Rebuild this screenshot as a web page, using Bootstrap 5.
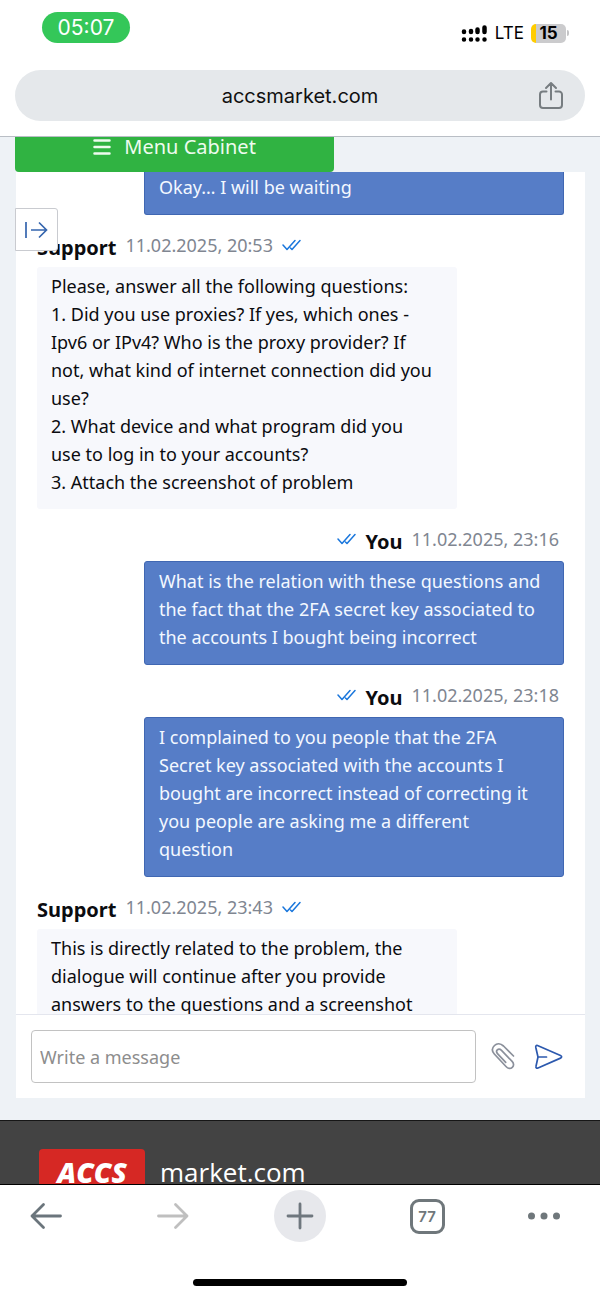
<!DOCTYPE html>
<html lang="en">
<head>
<meta charset="utf-8">
<meta name="viewport" content="width=device-width, initial-scale=1">
<title>accsmarket.com</title>
<link href="https://cdn.jsdelivr.net/npm/bootstrap@5.3.0/dist/css/bootstrap.min.css" rel="stylesheet">
<style>
body { font-family: "Noto Sans", "Open Sans", sans-serif; font-size: 18px; line-height: 28px; color: #0b0c10; background: #eef2f6; height: 100vh; overflow: hidden; }
button { background: none; border: 0; padding: 0; }
svg { display: block; }
.sys { font-family: Inter, sans-serif; }
.browser-top { background: #fff; border-bottom: 1px solid #b9bec5; }
.status-row { height: 70px; padding: 12px 31px 0 42px; }
.clock { width: 88px; height: 31px; background: #34c759; color: #fff; font-size: 21px; line-height: 31px; }
.signal-set { margin-top: 11px; font-size: 17px; line-height: 20px; color: #000; gap: 7px; }
.battery { width: 35px; height: 19px; border-radius: 5px; background: linear-gradient(90deg, #fc0 5px, #cbcbcd 5px); font-size: 17px; line-height: 19px; }
.battery-tip { width: 2px; height: 6px; background: #c4c4c6; border-radius: 0 2px 2px 0; margin-left: 1px; }
.address { height: 51px; margin: 0 15px 15px; background: #e5e8eb; color: #111; font-size: 20px; }
.address svg { right: 20px; top: 10px; }
.page-gutter { padding: 0 15px; min-height: 0; }
.menu-btn { width: 56%; height: 35px; background: #30b342; color: #eefbef; border-radius: 0 0 4px 4px; font-size: 20px; line-height: 20px; gap: 13px; padding-bottom: 16px; }
.chat { min-height: 0; margin-left: 1px; }
.feed { min-height: 0; padding: 0 21px; overflow: hidden; }
.bubble { width: 420px; max-width: 80%; padding: 5px 14px 13px; border-radius: 3px; flex-shrink: 0; }
.bubble.theirs { background: #f7f8fc; }
.bubble.mine { background: #567dc7; border: 1px solid #4067b2; color: #f3f8ff; align-self: flex-end; }
.bubble.mine:not(.tail) { padding-bottom: 13px; }
.bubble.tail { border-top: 0; border-radius: 0 0 3px 3px; padding-top: 1px; }
.meta-line { height: 52px; padding-top: 16px; gap: 9px; flex-shrink: 0; color: #808691; }
.meta-line.mine-meta { padding-right: 5px; }
.meta-line strong { color: #0b0c10; font-size: 20px; padding-top: 3px; }
.meta-line .ticks { color: #1976dc; }
.expand { left: 15px; top: 71px; width: 43px; height: 43px; background: #fff; border: 1px solid #c9cbd0; border-radius: 0 3px 3px 0; }
.composer { border-top: 1px solid #e4e6ee; padding: 15px 22px 15px 15px; gap: 15px; }
.composer input { height: 53px; border: 1px solid #c2c2c2; border-radius: 4px; padding: 0 8px; font-size: 18px; min-width: 0; }
.composer input::placeholder { color: #8d8d8d; }
.site-foot { height: 65px; margin-top: 22px; background: #434343; border-top: 1px solid #161616; border-bottom: 1px solid #000; padding: 28px 39px 0; gap: 15px; color: #fff; flex-shrink: 0; }
.logo-tag { width: 106px; height: 35px; padding-top: 11px; background: #d62824; border-radius: 4px 4px 0 0; font: italic 800 28px/24px "Open Sans", sans-serif; }
.logo-rest { padding-top: 11px; font: 26px/24px "Open Sans", sans-serif; }
.browser-nav { background: #fff; padding: 5px 20px 0; height: 113px; }
.browser-nav button { width: 52px; height: 52px; }
.browser-nav .new-tab { background: #e7e8ec; }
.tab-count { width: 35px; height: 35px; border: 3px solid #6f777b; border-radius: 9px; color: #6f777b; font-size: 15px; line-height: 29px; font-weight: 600; }
.home-bar { width: 214px; height: 7px; border-radius: 4px; background: #000; margin: 37px auto 0; }
</style>
</head>
<body class="d-flex flex-column">
<svg width="0" height="0" class="position-absolute">
  <symbol id="ticks" viewBox="0 0 19 12"><path d="M1 6l4 4.500L13 1.500M8.500 9l1.500 1.500L18 1.500" fill="none" stroke="currentColor" stroke-width="1.500" stroke-linecap="round" stroke-linejoin="round"/></symbol>
</svg>

<header class="browser-top sys flex-shrink-0">
  <div class="status-row d-flex justify-content-between align-items-start">
    <div class="clock rounded-pill text-center">05:07</div>
    <div class="signal-set d-flex align-items-center">
      <svg width="27" height="20" viewBox="0 0 27 20"><g stroke="#000" stroke-width="4.500" stroke-linecap="round"><path d="M3 8.500v.5M10 8v1M16.500 6.500v2.500M23.500 4.500v4.500M3 16.500v.1M10 16.500v.1M16.500 16.500v.1M23.500 16.500v.1"/></g></svg>
      <span>LTE</span>
      <div class="d-flex align-items-center"><div class="battery text-center fw-bold">15</div><div class="battery-tip"></div></div>
    </div>
  </div>
  <div class="address rounded-pill d-flex align-items-center justify-content-center position-relative">
    <span>accsmarket.com</span>
    <button aria-label="Share"><svg class="position-absolute" width="28" height="32" viewBox="0 0 28 32" fill="none" stroke="#777d81" stroke-width="2" stroke-linecap="round" stroke-linejoin="round"><path d="M9.500 11.500H6a3 3 0 0 0-3 3V25a3 3 0 0 0 3 3h16a3 3 0 0 0 3-3V14.500a3 3 0 0 0-3-3h-3.500M14 19.500V3.500M9 8l5-5 5 5"/></svg></button>
  </div>
</header>

<main class="page-gutter d-flex flex-column flex-grow-1 position-relative">
  <button class="menu-btn d-flex align-items-center justify-content-center flex-shrink-0">
    <svg width="18" height="18" viewBox="0 0 18 18" stroke="currentColor" stroke-width="2.500" stroke-linecap="round"><path d="M1.500 2.500h15M1.500 9h15M1.500 15.500h15"/></svg>
    <span>Menu Cabinet</span>
  </button>
  <section class="chat bg-white d-flex flex-column flex-grow-1">
    <div class="feed d-flex flex-column flex-grow-1">
      <div class="bubble mine tail">Okay… I will be waiting</div>

      <div class="meta-line d-flex"><strong>Support</strong><span>11.02.2025, 20:53</span><svg class="ticks mt-2" width="19" height="12"><use href="#ticks"/></svg></div>
      <div class="bubble theirs">Please, answer all the following questions:<br>1. Did you use proxies? If yes, which ones -<br>Ipv6 or IPv4? Who is the proxy provider? If<br>not, what kind of internet connection did you use?<br>2. What device and what program did you<br>use to log in to your accounts?<br>3. Attach the screenshot of problem</div>

      <div class="meta-line mine-meta d-flex justify-content-end"><svg class="ticks mt-2" width="19" height="12"><use href="#ticks"/></svg><strong>You</strong><span>11.02.2025, 23:16</span></div>
      <div class="bubble mine">What is the relation with these questions and the fact that the 2FA secret key associated to the accounts I bought being incorrect</div>

      <div class="meta-line mine-meta d-flex justify-content-end"><svg class="ticks mt-2" width="19" height="12"><use href="#ticks"/></svg><strong>You</strong><span>11.02.2025, 23:18</span></div>
      <div class="bubble mine">I complained to you people that the 2FA<br>Secret key associated with the accounts I<br>bought are incorrect instead of correcting it<br>you people are asking me a different<br>question</div>

      <div class="meta-line d-flex"><strong>Support</strong><span>11.02.2025, 23:43</span><svg class="ticks mt-2" width="19" height="12"><use href="#ticks"/></svg></div>
      <div class="bubble theirs">This is directly related to the problem, the dialogue will continue after you provide answers to the questions and a screenshot</div>
    </div>
    <form class="composer d-flex align-items-center">
      <input type="text" class="flex-grow-1" placeholder="Write a message" aria-label="Write a message">
      <button type="button" aria-label="Attach file"><svg width="24" height="28" viewBox="0 0 24 28" fill="none" stroke="#8b909b" stroke-width="1.700" stroke-linecap="round" stroke-linejoin="round"><path d="M22.500 13L12.500 3C9.500.3 5.800.3 3.500 2.500S.600 8 3.300 11L15 23.500c2 2.300 4.500 2.500 6.300.8s1.600-4-.4-6.100L10.500 7.300C9 5.900 7.300 5.900 6.300 6.900s-1 2.400.4 3.900l8 8.500"/></svg></button>
      <button type="submit" class="ms-1" aria-label="Send"><svg width="29" height="26" viewBox="0 0 29 26" fill="none" stroke="#2c59ae" stroke-width="1.700" stroke-linecap="round" stroke-linejoin="round"><path d="M3.500 1.500L26.500 11.500c1.500.7 1.500 2 0 2.600L4 24c-1.500.6-2.400-.3-2-1.800L4 13 1.800 3.500C1.500 2 2.300 1 3.500 1.500zM4 13h8.500"/></svg></button>
    </form>
  </section>
  <button class="expand position-absolute d-flex align-items-center justify-content-center" aria-label="Open list"><svg width="26" height="20" viewBox="0 0 26 20" fill="none" stroke="#3565ae" stroke-width="1.700"><path d="M2 2v16M7 10h15.500M15 2.500l7.500 7.500-7.500 7.500"/></svg></button>
</main>

<footer class="site-foot d-flex align-items-start">
  <div class="logo-tag text-center">ACCS</div>
  <div class="logo-rest">market.com</div>
</footer>

<nav class="browser-nav sys flex-shrink-0">
  <div class="d-flex justify-content-between align-items-center">
    <button class="d-flex align-items-center justify-content-center" aria-label="Back"><svg width="34" height="28" viewBox="0 0 34 28" fill="none" stroke="#6b757c" stroke-width="2.800" stroke-linecap="round" stroke-linejoin="round"><path d="M31.500 14H3M14.500 2.500L3 14l11.500 11.500"/></svg></button>
    <button class="d-flex align-items-center justify-content-center" aria-label="Forward"><svg width="34" height="28" viewBox="0 0 34 28" fill="none" stroke="#bfbfbf" stroke-width="2.800" stroke-linecap="round" stroke-linejoin="round"><path d="M2.500 14H31M19.500 2.500L31 14 19.500 25.500"/></svg></button>
    <button class="new-tab rounded-circle d-flex align-items-center justify-content-center" aria-label="New tab"><svg width="28" height="28" viewBox="0 0 28 28" stroke="#6f777e" stroke-width="2.800" stroke-linecap="round"><path d="M14 2v24M2 14h24"/></svg></button>
    <button class="d-flex align-items-center justify-content-center" aria-label="77 open tabs"><span class="tab-count">77</span></button>
    <button class="d-flex align-items-center" aria-label="More"><svg width="34" height="8" viewBox="0 0 34 8" fill="#6f777b"><circle cx="3.500" cy="4" r="3.500"/><circle cx="16" cy="4" r="3.500"/><circle cx="28.500" cy="4" r="3.500"/></svg></button>
  </div>
  <div class="home-bar"></div>
</nav>
<script src="https://cdn.jsdelivr.net/npm/bootstrap@5.3.0/dist/js/bootstrap.bundle.min.js"></script>
</body>
</html>
